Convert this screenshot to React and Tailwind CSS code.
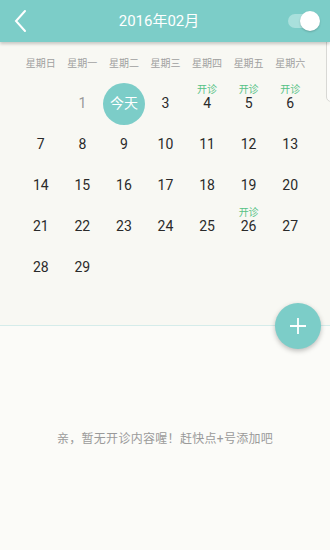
import React from 'react';

const WEEK = ['星期日', '星期一', '星期二', '星期三', '星期四', '星期五', '星期六'];
const OPEN = [4, 5, 6, 26];

const cells = [];
for (let i = 0; i < 1; i++) cells.push(null);
for (let d = 1; d <= 29; d++) cells.push(d);

const DayCell = ({ day }) => {
  if (!day) return <div className="h-[41px]" />;
  const isToday = day === 2;
  const open = OPEN.includes(day);
  return (
    <div className="h-[41px] relative flex items-center justify-center">
      {isToday ? (
        <div className="w-[42px] h-[42px] rounded-full bg-[#7ccdc8] text-white text-[14px] flex items-center justify-center">
          今天
        </div>
      ) : (
        <span className={`text-[14px] ${day === 1 ? 'text-[#999]' : 'text-[#2a2a2a]'}`}>{day}</span>
      )}
      {open && (
        <span className="absolute top-[2px] left-0 right-0 text-center text-[10px] leading-none text-[#55c285]">开诊</span>
      )}
    </div>
  );
};

export default function App() {
  return (
    <div
      className="w-[330px] h-[550px] overflow-hidden relative bg-[#fbfbf8] flex flex-col"
      style={{ fontFamily: 'Roboto, "Noto Sans CJK SC", sans-serif' }}
    >
      {/* header */}
      <div className="h-[42px] bg-[#7ccdc8] flex items-center px-[12px] relative z-10 shadow-[0_2px_3px_rgba(0,0,0,0.2)]">
        <svg width="18" height="24" viewBox="0 0 18 24" className="mr-auto">
          <path d="M13 2 L4 12 L13 22" fill="none" stroke="white" strokeWidth="2" strokeLinecap="round" />
        </svg>
        <span className="absolute left-0 right-[12px] text-center text-white text-[15px] pointer-events-none">2016年02月</span>
        <div className="relative w-[28px] h-[14px] rounded-full bg-[#a9e0dc] mr-[2px]">
          <div className="absolute right-[-4px] top-[-3px] w-[20px] h-[20px] rounded-full bg-white shadow-[0_1px_2px_rgba(0,0,0,0.2)]" />
        </div>
      </div>

      {/* edge card */}
      <div className="absolute right-[-10px] top-[30px] w-[14px] h-[72px] rounded-[5px] border border-[#d8d8d4] bg-[#fdfdfb]" />

      {/* calendar */}
      <div className="bg-[#f8f8f3] h-[283px] pl-[20px] pr-[19px] pt-[11px]">
        <div className="grid grid-cols-7 h-[20px] items-center">
          {WEEK.map((w) => (
            <span key={w} className="text-center text-[10px] text-[#a0a0a0]">{w}</span>
          ))}
        </div>
        <div className="grid grid-cols-7 mt-[10px]">
          {cells.map((d, i) => (
            <DayCell key={i} day={d} />
          ))}
        </div>
      </div>
      <div className="h-px bg-[#d5ecea]" />

      {/* fab */}
      <div className="absolute left-[275px] top-[303px] w-[46px] h-[46px] rounded-full bg-[#7ccdc8] flex items-center justify-center shadow-[0_2px_5px_rgba(0,0,0,0.25)]">
        <svg width="20" height="20" viewBox="0 0 20 20">
          <path d="M10 2 V18 M2 10 H18" stroke="white" strokeWidth="1.8" />
        </svg>
      </div>

      <div className="flex-1 flex items-start justify-center pt-[104px]">
        <span className="text-[12px] text-[#9a9a9a] tracking-[0.3px]">亲，暂无开诊内容喔！赶快点+号添加吧</span>
      </div>
    </div>
  );
}
